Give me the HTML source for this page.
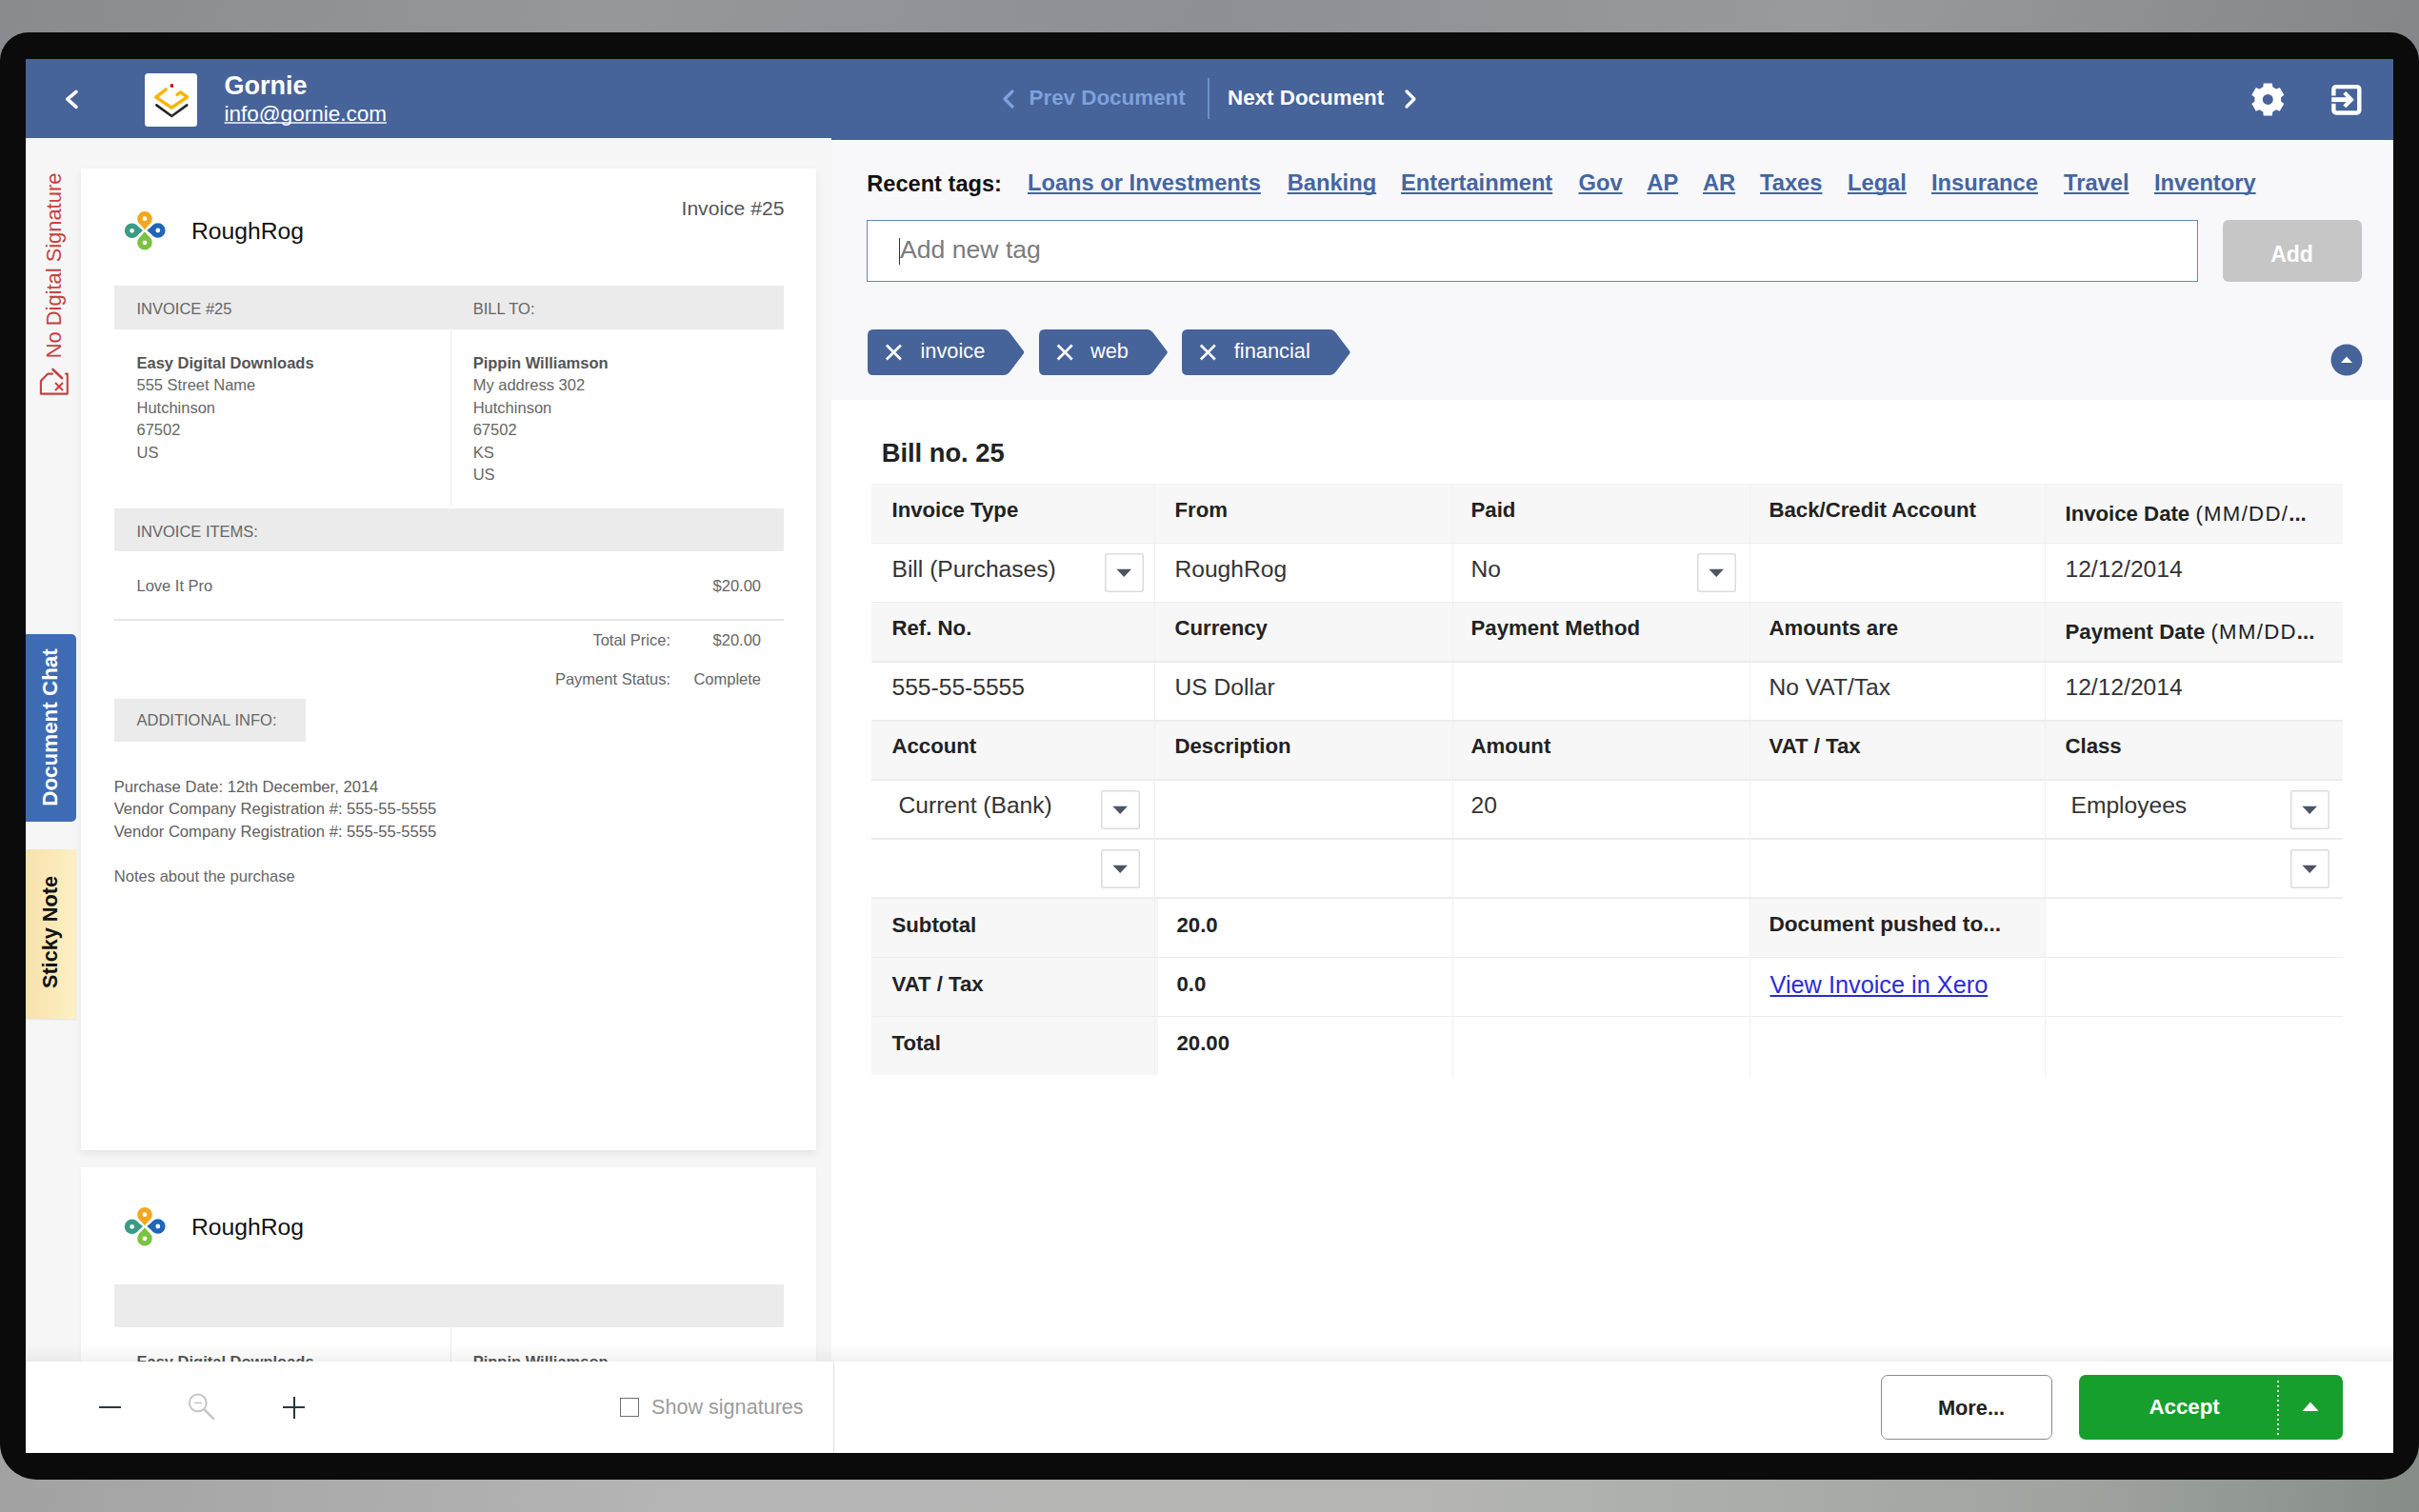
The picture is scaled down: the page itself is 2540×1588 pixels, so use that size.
<!DOCTYPE html>
<html><head><meta charset="utf-8"><title>Gornie</title>
<style>
html,body{margin:0;padding:0;width:2540px;height:1588px;overflow:hidden;background:#9a9b9d;}
body{position:relative;font-family:"Liberation Sans",sans-serif;}
.b{position:absolute;display:block;}
.t{position:absolute;white-space:nowrap;}
</style></head><body>
<div class="b" style="left:0;top:0;width:2540px;height:1588px;background:linear-gradient(180deg,#8d8e93 0px,#909196 34px,#a9aaa9 1554px,#b3b4b2 1588px);"></div>
<div class="b" style="left:0;top:0;width:2540px;height:80px;background:linear-gradient(100deg,#8a8b8e 0%,#96979b 25%,#8d8f95 50%,#999a9d 75%,#85868a 100%);"></div>
<div class="b" style="left:0;top:1500px;width:2540px;height:88px;background:linear-gradient(95deg,#a2a2a2 0%,#b6b6b6 30%,#b4b5b3 60%,#a0a5a0 85%,#868d87 100%);"></div>
<div class="b" style="left:0.00px;top:34.00px;width:2540.00px;height:1520.00px;background:#0b0b0b;border-radius:30px 30px 38px 38px;"></div>
<div class="b" style="left:27.00px;top:62.00px;width:2486.00px;height:1464.00px;background:#ffffff;"></div>
<div class="b" style="left:27.00px;top:62.00px;width:2486.00px;height:83.00px;background:#46639a;"></div>
<div class="b" style="left:873.00px;top:145.00px;width:1640.00px;height:2.00px;background:#46639a;"></div>
<svg class="b" style="left:60.00px;top:88.00px;" width="30" height="32" viewBox="0 0 30 32"><polyline points="20,8.3 10.8,16.2 20,24.3" fill="none" stroke="#fff" stroke-width="3.6" stroke-linecap="round" stroke-linejoin="round"/></svg>
<div class="b" style="left:151.80px;top:76.60px;width:55.70px;height:56.20px;background:#fff;border-radius:3.5px;"></div>
<svg class="b" style="left:151.50px;top:76.50px;" width="56" height="56" viewBox="0 0 56 56"><circle cx="28.4" cy="13" r="1.9" fill="#d0021b"/><polyline points="22.3,16.8 11.8,25.2 28.2,36.2 44.6,24.9 37.6,19.8 34,22.4" fill="none" stroke="#f9b400" stroke-width="3.4" stroke-linejoin="round" stroke-linecap="round"/><polyline points="12.3,33.4 28.3,45 44.3,33.4" fill="none" stroke="#262626" stroke-width="2.6" stroke-linejoin="miter" stroke-linecap="round"/></svg>
<div class="t" style="top:77.24px;font-size:27px;line-height:27px;color:#fff;font-weight:700;left:235.50px;">Gornie</div>
<div class="t" style="top:108.55px;font-size:22.5px;line-height:22.5px;color:#fff;left:235.50px;text-decoration:underline;text-decoration-color:rgba(255,255,255,0.7);text-underline-offset:1px;text-decoration-thickness:1.5px;text-decoration-skip-ink:none;">info@gornie.com</div>
<svg class="b" style="left:1046.00px;top:91.00px;" width="24" height="26" viewBox="0 0 24 26"><polyline points="17,5 9,13 17,21" fill="none" stroke="#7ea2dd" stroke-width="3.2" stroke-linecap="round" stroke-linejoin="round"/></svg>
<div class="t" style="top:92.33px;font-size:22.4px;line-height:22.4px;color:#7ea2dd;font-weight:700;left:1080.50px;">Prev Document</div>
<div class="b" style="left:1268.00px;top:82.00px;width:2.00px;height:42.50px;background:#6d8fc9;"></div>
<div class="t" style="top:92.33px;font-size:22.4px;line-height:22.4px;color:#fff;font-weight:700;left:1289.00px;">Next Document</div>
<svg class="b" style="left:1469.50px;top:91.00px;" width="24" height="26" viewBox="0 0 24 26"><polyline points="7,5 15,13 7,21" fill="none" stroke="#fff" stroke-width="3.2" stroke-linecap="round" stroke-linejoin="round"/></svg>
<svg class="b" style="left:2362.00px;top:85.00px;" width="40" height="40" viewBox="0 0 40 40"><path d="M14.28,6.33 L14.74,2.40 L23.86,2.40 L24.32,6.33 L28.11,8.52 L31.75,6.95 L36.30,14.84 L33.13,17.21 L33.13,21.59 L36.30,23.96 L31.75,31.85 L28.11,30.28 L24.32,32.47 L23.86,36.40 L14.74,36.40 L14.28,32.47 L10.49,30.28 L6.85,31.85 L2.30,23.96 L5.47,21.59 L5.47,17.21 L2.30,14.84 L6.85,6.95 L10.49,8.52 Z" fill="#fff"/><circle cx="19.3" cy="19.4" r="5.5" fill="#46639a"/></svg>
<svg class="b" style="left:2444.00px;top:84.00px;" width="42" height="42" viewBox="0 0 42 42"><rect x="6.4" y="7.1" width="26.9" height="27.4" rx="2.5" fill="none" stroke="#fff" stroke-width="4.4"/><line x1="2" y1="20.65" x2="24" y2="20.65" stroke="#46639a" stroke-width="8.3"/><line x1="4.2" y1="20.65" x2="25" y2="20.65" stroke="#fff" stroke-width="4.9"/><polyline points="17.8,13.4 24.9,20.65 17.8,27.9" fill="none" stroke="#fff" stroke-width="4.2"/></svg>
<div class="b" style="left:27.00px;top:145.00px;width:846.00px;height:1285.00px;background:#f6f6f6;"></div>
<div class="t" style="left:56.6px;top:279.2px;width:0;height:0;"><div style="position:absolute;left:0;top:0;transform:translate(-50%,-50%) rotate(-90deg);white-space:nowrap;font-size:21.9px;line-height:22px;color:#c6413f;">No Digital Signature</div></div>
<svg class="b" style="left:38.00px;top:384.00px;" width="38" height="34" viewBox="0 0 38 34"><path d="M17,8.6 H12.3 L4.9,16 V29.6 H32.8 V8.6 H31" fill="none" stroke="#c6413f" stroke-width="2.1" stroke-linejoin="round" stroke-linecap="round"/><line x1="17.5" y1="4" x2="27" y2="13" stroke="#c6413f" stroke-width="2.6" stroke-linecap="round"/><line x1="20" y1="18" x2="28" y2="26" stroke="#c6413f" stroke-width="2"/><line x1="28" y1="18" x2="20" y2="26" stroke="#c6413f" stroke-width="2"/></svg>
<div class="b" style="left:27.00px;top:666.00px;width:53.20px;height:197.00px;background:#3e6cb4;border-radius:0 5px 5px 0;"></div>
<div class="t" style="left:53.2px;top:764px;width:0;height:0;"><div style="position:absolute;left:0;top:0;transform:translate(-50%,-50%) rotate(-90deg);white-space:nowrap;font-size:22.4px;line-height:22px;color:#fff;font-weight:700;">Document Chat</div></div>
<div class="b" style="left:27.00px;top:891.70px;width:53.20px;height:178.80px;background:linear-gradient(90deg,#f6e2ac,#fdf0c3);box-shadow:0 1px 2px rgba(0,0,0,0.08);"></div>
<div class="t" style="left:53.2px;top:979px;width:0;height:0;"><div style="position:absolute;left:0;top:0;transform:translate(-50%,-50%) rotate(-90deg);white-space:nowrap;font-size:21.7px;line-height:22px;color:#111;font-weight:700;">Sticky Note</div></div>
<div class="b" style="left:85.00px;top:177.00px;width:772.00px;height:1031.00px;background:#fff;box-shadow:0 4px 8px rgba(0,0,0,0.07);"></div>
<svg class="b" style="left:130.00px;top:220.00px;" width="44" height="44" viewBox="0 0 44 44"><circle cx="22" cy="9.7" r="5.1" fill="none" stroke="#f1a81f" stroke-width="5.4"/><polygon points="22.0,21.2 16.5,14.7 27.5,14.7" fill="#f1a81f"/><circle cx="35.8" cy="22" r="5.1" fill="none" stroke="#1f66b8" stroke-width="5.4"/><polygon points="24.3,22.0 30.8,16.5 30.8,27.5" fill="#1f66b8"/><circle cx="22" cy="34.8" r="5.1" fill="none" stroke="#7cc242" stroke-width="5.4"/><polygon points="22.0,23.3 27.5,29.8 16.5,29.8" fill="#7cc242"/><circle cx="8.6" cy="22.3" r="5.1" fill="none" stroke="#3a9b86" stroke-width="5.4"/><polygon points="20.1,22.0 13.7,27.7 13.5,16.7" fill="#3a9b86"/></svg>
<div class="t" style="top:231.09px;font-size:24.7px;line-height:24.7px;color:#111;left:201.00px;">RoughRog</div>
<div class="b" style="left:85.00px;top:1226.00px;width:772.00px;height:204.00px;background:#fff;box-shadow:0 1px 3px rgba(0,0,0,0.06);"></div>
<svg class="b" style="left:130.00px;top:1266.00px;" width="44" height="44" viewBox="0 0 44 44"><circle cx="22" cy="9.7" r="5.1" fill="none" stroke="#f1a81f" stroke-width="5.4"/><polygon points="22.0,21.2 16.5,14.7 27.5,14.7" fill="#f1a81f"/><circle cx="35.8" cy="22" r="5.1" fill="none" stroke="#1f66b8" stroke-width="5.4"/><polygon points="24.3,22.0 30.8,16.5 30.8,27.5" fill="#1f66b8"/><circle cx="22" cy="34.8" r="5.1" fill="none" stroke="#7cc242" stroke-width="5.4"/><polygon points="22.0,23.3 27.5,29.8 16.5,29.8" fill="#7cc242"/><circle cx="8.6" cy="22.3" r="5.1" fill="none" stroke="#3a9b86" stroke-width="5.4"/><polygon points="20.1,22.0 13.7,27.7 13.5,16.7" fill="#3a9b86"/></svg>
<div class="t" style="top:1277.09px;font-size:24.7px;line-height:24.7px;color:#111;left:201.00px;">RoughRog</div>
<div class="t" style="top:208.43px;font-size:21.1px;line-height:21.1px;color:#555;right:1716.60px;">Invoice #25</div>
<div class="b" style="left:120.00px;top:300.00px;width:703.00px;height:45.50px;background:#ebebeb;"></div>
<div class="b" style="left:473.00px;top:345.50px;width:1.00px;height:186.50px;background:#ebebeb;"></div>
<div class="t" style="top:315.83px;font-size:16.5px;line-height:16.5px;color:#666;left:143.50px;">INVOICE #25</div>
<div class="t" style="top:315.83px;font-size:16.5px;line-height:16.5px;color:#666;left:496.70px;">BILL TO:</div>
<div class="t" style="top:373.03px;font-size:16.5px;line-height:16.5px;color:#666;left:143.50px;"><b style="color:#555">Easy Digital Downloads</b></div>
<div class="t" style="top:396.43px;font-size:16.5px;line-height:16.5px;color:#666;left:143.50px;">555 Street Name</div>
<div class="t" style="top:419.83px;font-size:16.5px;line-height:16.5px;color:#666;left:143.50px;">Hutchinson</div>
<div class="t" style="top:443.23px;font-size:16.5px;line-height:16.5px;color:#666;left:143.50px;">67502</div>
<div class="t" style="top:466.63px;font-size:16.5px;line-height:16.5px;color:#666;left:143.50px;">US</div>
<div class="t" style="top:373.03px;font-size:16.5px;line-height:16.5px;color:#666;left:496.70px;"><b style="color:#555">Pippin Williamson</b></div>
<div class="t" style="top:396.43px;font-size:16.5px;line-height:16.5px;color:#666;left:496.70px;">My address 302</div>
<div class="t" style="top:419.83px;font-size:16.5px;line-height:16.5px;color:#666;left:496.70px;">Hutchinson</div>
<div class="t" style="top:443.23px;font-size:16.5px;line-height:16.5px;color:#666;left:496.70px;">67502</div>
<div class="t" style="top:466.63px;font-size:16.5px;line-height:16.5px;color:#666;left:496.70px;">KS</div>
<div class="t" style="top:490.03px;font-size:16.5px;line-height:16.5px;color:#666;left:496.70px;">US</div>
<div class="b" style="left:120.00px;top:534.00px;width:703.00px;height:45.00px;background:#ebebeb;"></div>
<div class="t" style="top:550.03px;font-size:16.5px;line-height:16.5px;color:#666;left:143.50px;">INVOICE ITEMS:</div>
<div class="t" style="top:607.03px;font-size:16.5px;line-height:16.5px;color:#666;left:143.50px;">Love It Pro</div>
<div class="t" style="top:607.03px;font-size:16.5px;line-height:16.5px;color:#666;right:1741.00px;">$20.00</div>
<div class="b" style="left:120.00px;top:650.00px;width:703.00px;height:1.50px;background:#e6e6e6;"></div>
<div class="t" style="top:663.53px;font-size:16.5px;line-height:16.5px;color:#666;right:1836.00px;">Total Price:</div>
<div class="t" style="top:663.53px;font-size:16.5px;line-height:16.5px;color:#666;right:1741.00px;">$20.00</div>
<div class="t" style="top:704.83px;font-size:16.5px;line-height:16.5px;color:#666;right:1836.00px;">Payment Status:</div>
<div class="t" style="top:704.83px;font-size:16.5px;line-height:16.5px;color:#666;right:1741.00px;">Complete</div>
<div class="b" style="left:120.00px;top:734.30px;width:200.70px;height:44.30px;background:#ebebeb;"></div>
<div class="t" style="top:748.43px;font-size:16.5px;line-height:16.5px;color:#666;left:143.50px;">ADDITIONAL INFO:</div>
<div class="t" style="top:818.84px;font-size:16.6px;line-height:16.6px;color:#606060;left:119.70px;">Purchase Date: 12th December, 2014</div>
<div class="t" style="top:842.24px;font-size:16.6px;line-height:16.6px;color:#606060;left:119.70px;">Vendor Company Registration #: 555-55-5555</div>
<div class="t" style="top:865.64px;font-size:16.6px;line-height:16.6px;color:#606060;left:119.70px;">Vendor Company Registration #: 555-55-5555</div>
<div class="t" style="top:912.74px;font-size:16.6px;line-height:16.6px;color:#666;left:119.70px;">Notes about the purchase</div>
<div class="b" style="left:120.00px;top:1348.50px;width:703.00px;height:45.70px;background:#ebebeb;"></div>
<div class="b" style="left:473.00px;top:1394.20px;width:1.00px;height:35.80px;background:#ebebeb;"></div>
<div class="t" style="top:1422.03px;font-size:16.5px;line-height:16.5px;color:#666;left:143.50px;"><b style="color:#555">Easy Digital Downloads</b></div>
<div class="t" style="top:1422.03px;font-size:16.5px;line-height:16.5px;color:#666;left:496.70px;"><b style="color:#555">Pippin Williamson</b></div>
<div class="b" style="left:873.00px;top:147.00px;width:1640.00px;height:273.00px;background:#f8f8fa;"></div>
<div class="t" style="top:181.52px;font-size:23.6px;line-height:23.6px;color:#111;font-weight:700;left:910.30px;">Recent tags:</div>
<div class="t" style="top:181.43px;font-size:23.7px;line-height:23.7px;color:#4565a3;font-weight:700;left:1079.00px;text-decoration:underline;text-underline-offset:1.5px;text-decoration-thickness:1.6px;text-decoration-skip-ink:none;">Loans or Investments</div>
<div class="t" style="top:181.43px;font-size:23.7px;line-height:23.7px;color:#4565a3;font-weight:700;left:1351.70px;text-decoration:underline;text-underline-offset:1.5px;text-decoration-thickness:1.6px;text-decoration-skip-ink:none;">Banking</div>
<div class="t" style="top:181.43px;font-size:23.7px;line-height:23.7px;color:#4565a3;font-weight:700;left:1471.00px;text-decoration:underline;text-underline-offset:1.5px;text-decoration-thickness:1.6px;text-decoration-skip-ink:none;">Entertainment</div>
<div class="t" style="top:181.43px;font-size:23.7px;line-height:23.7px;color:#4565a3;font-weight:700;left:1657.50px;text-decoration:underline;text-underline-offset:1.5px;text-decoration-thickness:1.6px;text-decoration-skip-ink:none;">Gov</div>
<div class="t" style="top:181.43px;font-size:23.7px;line-height:23.7px;color:#4565a3;font-weight:700;left:1729.30px;text-decoration:underline;text-underline-offset:1.5px;text-decoration-thickness:1.6px;text-decoration-skip-ink:none;">AP</div>
<div class="t" style="top:181.43px;font-size:23.7px;line-height:23.7px;color:#4565a3;font-weight:700;left:1788.00px;text-decoration:underline;text-underline-offset:1.5px;text-decoration-thickness:1.6px;text-decoration-skip-ink:none;">AR</div>
<div class="t" style="top:181.43px;font-size:23.7px;line-height:23.7px;color:#4565a3;font-weight:700;left:1848.00px;text-decoration:underline;text-underline-offset:1.5px;text-decoration-thickness:1.6px;text-decoration-skip-ink:none;">Taxes</div>
<div class="t" style="top:181.43px;font-size:23.7px;line-height:23.7px;color:#4565a3;font-weight:700;left:1940.00px;text-decoration:underline;text-underline-offset:1.5px;text-decoration-thickness:1.6px;text-decoration-skip-ink:none;">Legal</div>
<div class="t" style="top:181.43px;font-size:23.7px;line-height:23.7px;color:#4565a3;font-weight:700;left:2028.00px;text-decoration:underline;text-underline-offset:1.5px;text-decoration-thickness:1.6px;text-decoration-skip-ink:none;">Insurance</div>
<div class="t" style="top:181.43px;font-size:23.7px;line-height:23.7px;color:#4565a3;font-weight:700;left:2167.00px;text-decoration:underline;text-underline-offset:1.5px;text-decoration-thickness:1.6px;text-decoration-skip-ink:none;">Travel</div>
<div class="t" style="top:181.43px;font-size:23.7px;line-height:23.7px;color:#4565a3;font-weight:700;left:2262.00px;text-decoration:underline;text-underline-offset:1.5px;text-decoration-thickness:1.6px;text-decoration-skip-ink:none;">Inventory</div>
<div class="b" style="left:909.60px;top:230.50px;width:1398.90px;height:65.00px;background:#fff;border:1.6px solid #6a86b3;box-sizing:border-box;"></div>
<div class="t" style="top:249.08px;font-size:26.6px;line-height:26.6px;color:#7c7c7c;left:945.00px;">Add new tag</div>
<div class="b" style="left:944.00px;top:250.00px;width:1.30px;height:28.00px;background:#333;"></div>
<div class="b" style="left:2334.00px;top:231.00px;width:146.00px;height:65.00px;background:#c6c6c6;border-radius:6px;"></div>
<div class="t" style="top:255.53px;font-size:23px;line-height:23px;color:#fff;font-weight:700;left:1906.50px;width:1000px;text-align:center;">Add</div>
<svg class="b" style="left:911.30px;top:346.00px;" width="164.70000000000005" height="48" viewBox="0 0 164.70000000000005 48"><path d="M6,0 H142.70000000000005 Q146.70000000000005,0 149.70000000000005,4 L163.90000000000003,22.8 Q164.70000000000005,24.0 163.90000000000003,25.2 L149.70000000000005,44 Q146.70000000000005,48 142.70000000000005,48 H6 Q0,48 0,42 V6 Q0,0 6,0 Z" fill="#46639a"/><path d="M19.900000000000023,16.5 L34.90000000000002,31.5 M34.90000000000002,16.5 L19.900000000000023,31.5" stroke="#fff" stroke-width="2.7"/></svg>
<div class="t" style="top:357.54px;font-size:21.8px;line-height:21.8px;color:#fff;left:966.50px;">invoice</div>
<svg class="b" style="left:1090.80px;top:346.00px;" width="135.20000000000005" height="48" viewBox="0 0 135.20000000000005 48"><path d="M6,0 H113.20000000000005 Q117.20000000000005,0 120.20000000000005,4 L134.40000000000003,22.8 Q135.20000000000005,24.0 134.40000000000003,25.2 L120.20000000000005,44 Q117.20000000000005,48 113.20000000000005,48 H6 Q0,48 0,42 V6 Q0,0 6,0 Z" fill="#46639a"/><path d="M19.70000000000009,16.5 L34.70000000000009,31.5 M34.70000000000009,16.5 L19.70000000000009,31.5" stroke="#fff" stroke-width="2.7"/></svg>
<div class="t" style="top:357.54px;font-size:21.8px;line-height:21.8px;color:#fff;left:1145.00px;">web</div>
<svg class="b" style="left:1241.00px;top:346.00px;" width="177" height="48" viewBox="0 0 177 48"><path d="M6,0 H155 Q159,0 162,4 L176.2,22.8 Q177,24.0 176.2,25.2 L162,44 Q159,48 155,48 H6 Q0,48 0,42 V6 Q0,0 6,0 Z" fill="#46639a"/><path d="M19.8,16.5 L34.8,31.5 M34.8,16.5 L19.8,31.5" stroke="#fff" stroke-width="2.7"/></svg>
<div class="t" style="top:357.54px;font-size:21.8px;line-height:21.8px;color:#fff;left:1295.80px;">financial</div>
<svg class="b" style="left:2447.00px;top:361.00px;" width="34" height="34" viewBox="0 0 34 34"><circle cx="17" cy="17" r="16.5" fill="#46639a"/><polygon points="11,20 17,13.5 23,20" fill="#fff"/></svg>
<div class="t" style="top:462.39px;font-size:27.3px;line-height:27.3px;color:#222;font-weight:700;left:925.70px;">Bill no. 25</div>
<div class="b" style="left:915.00px;top:508.20px;width:1545.00px;height:62.11px;background:#f7f7f7;"></div>
<div class="b" style="left:915.00px;top:632.42px;width:1545.00px;height:62.11px;background:#f7f7f7;"></div>
<div class="b" style="left:915.00px;top:756.64px;width:1545.00px;height:62.11px;background:#f7f7f7;"></div>
<div class="b" style="left:915.00px;top:942.97px;width:300.50px;height:62.11px;background:#f7f7f7;"></div>
<div class="b" style="left:915.00px;top:1005.08px;width:300.50px;height:62.11px;background:#f7f7f7;"></div>
<div class="b" style="left:915.00px;top:1067.19px;width:300.50px;height:62.11px;background:#f7f7f7;"></div>
<div class="b" style="left:1837.00px;top:942.97px;width:310.50px;height:62.11px;background:#f7f7f7;"></div>
<div class="b" style="left:915.00px;top:569.81px;width:1545.00px;height:1.50px;background:#ececec;"></div>
<div class="b" style="left:915.00px;top:631.92px;width:1545.00px;height:1.50px;background:#ececec;"></div>
<div class="b" style="left:915.00px;top:694.03px;width:1545.00px;height:1.50px;background:#ececec;"></div>
<div class="b" style="left:915.00px;top:756.14px;width:1545.00px;height:1.50px;background:#ececec;"></div>
<div class="b" style="left:915.00px;top:818.25px;width:1545.00px;height:1.50px;background:#ececec;"></div>
<div class="b" style="left:915.00px;top:880.36px;width:1545.00px;height:1.50px;background:#ececec;"></div>
<div class="b" style="left:915.00px;top:942.47px;width:1545.00px;height:1.50px;background:#ececec;"></div>
<div class="b" style="left:915.00px;top:1004.58px;width:1545.00px;height:1.50px;background:#ececec;"></div>
<div class="b" style="left:915.00px;top:1066.69px;width:1545.00px;height:1.50px;background:#ececec;"></div>
<div class="b" style="left:1212.00px;top:508.00px;width:1.00px;height:623.00px;background:#f0f0f0;"></div>
<div class="b" style="left:1524.50px;top:508.00px;width:1.00px;height:623.00px;background:#f0f0f0;"></div>
<div class="b" style="left:1836.50px;top:508.00px;width:1.00px;height:623.00px;background:#f0f0f0;"></div>
<div class="b" style="left:2147.00px;top:508.00px;width:1.00px;height:623.00px;background:#f0f0f0;"></div>
<div class="t" style="top:524.60px;font-size:22.2px;line-height:22.2px;color:#222;font-weight:700;left:936.50px;">Invoice Type</div>
<div class="t" style="top:524.60px;font-size:22.2px;line-height:22.2px;color:#222;font-weight:700;left:1233.50px;">From</div>
<div class="t" style="top:524.60px;font-size:22.2px;line-height:22.2px;color:#222;font-weight:700;left:1544.50px;">Paid</div>
<div class="t" style="top:524.60px;font-size:22.2px;line-height:22.2px;color:#222;font-weight:700;left:1857.50px;">Back/Credit Account</div>
<div class="t" style="top:528.60px;font-size:22.2px;line-height:22.2px;color:#222;font-weight:700;left:2168.50px;">Invoice Date <span style="font-weight:400;letter-spacing:1.3px;">(MM/DD/</span>...</div>
<div class="t" style="top:585.98px;font-size:24.6px;line-height:24.6px;color:#333;left:936.50px;">Bill (Purchases)</div>
<div class="t" style="top:585.98px;font-size:24.6px;line-height:24.6px;color:#333;left:1233.50px;">RoughRog</div>
<div class="t" style="top:585.98px;font-size:24.6px;line-height:24.6px;color:#333;left:1544.50px;">No</div>
<div class="t" style="top:585.98px;font-size:24.6px;line-height:24.6px;color:#333;left:2168.50px;">12/12/2014</div>
<svg class="b" style="left:1160.00px;top:581.00px;" width="41" height="41" viewBox="0 0 41 41"><rect x="0.75" y="0.75" width="39.5" height="39.5" rx="2" fill="#fff" stroke="#dcdcdc" stroke-width="1.5"/><polygon points="12.4,16.8 28,16.8 20.2,25" fill="#4b5563"/></svg>
<svg class="b" style="left:1781.50px;top:581.00px;" width="41" height="41" viewBox="0 0 41 41"><rect x="0.75" y="0.75" width="39.5" height="39.5" rx="2" fill="#fff" stroke="#dcdcdc" stroke-width="1.5"/><polygon points="12.4,16.8 28,16.8 20.2,25" fill="#4b5563"/></svg>
<div class="t" style="top:648.82px;font-size:22.2px;line-height:22.2px;color:#222;font-weight:700;left:936.50px;">Ref. No.</div>
<div class="t" style="top:648.82px;font-size:22.2px;line-height:22.2px;color:#222;font-weight:700;left:1233.50px;">Currency</div>
<div class="t" style="top:648.82px;font-size:22.2px;line-height:22.2px;color:#222;font-weight:700;left:1544.50px;">Payment Method</div>
<div class="t" style="top:648.82px;font-size:22.2px;line-height:22.2px;color:#222;font-weight:700;left:1857.50px;">Amounts are</div>
<div class="t" style="top:652.82px;font-size:22.2px;line-height:22.2px;color:#222;font-weight:700;left:2168.50px;">Payment Date <span style="font-weight:400;letter-spacing:1.3px;">(MM/DD</span>...</div>
<div class="t" style="top:710.20px;font-size:24.6px;line-height:24.6px;color:#333;left:936.50px;">555-55-5555</div>
<div class="t" style="top:710.20px;font-size:24.6px;line-height:24.6px;color:#333;left:1233.50px;">US Dollar</div>
<div class="t" style="top:710.20px;font-size:24.6px;line-height:24.6px;color:#333;left:1857.50px;">No VAT/Tax</div>
<div class="t" style="top:710.20px;font-size:24.6px;line-height:24.6px;color:#333;left:2168.50px;">12/12/2014</div>
<div class="t" style="top:773.04px;font-size:22.2px;line-height:22.2px;color:#222;font-weight:700;left:936.50px;">Account</div>
<div class="t" style="top:773.04px;font-size:22.2px;line-height:22.2px;color:#222;font-weight:700;left:1233.50px;">Description</div>
<div class="t" style="top:773.04px;font-size:22.2px;line-height:22.2px;color:#222;font-weight:700;left:1544.50px;">Amount</div>
<div class="t" style="top:773.04px;font-size:22.2px;line-height:22.2px;color:#222;font-weight:700;left:1857.50px;">VAT / Tax</div>
<div class="t" style="top:773.04px;font-size:22.2px;line-height:22.2px;color:#222;font-weight:700;left:2168.50px;">Class</div>
<div class="t" style="top:834.42px;font-size:24.6px;line-height:24.6px;color:#333;left:943.50px;">Current (Bank)</div>
<div class="t" style="top:834.42px;font-size:24.6px;line-height:24.6px;color:#333;left:1544.50px;">20</div>
<div class="t" style="top:834.42px;font-size:24.6px;line-height:24.6px;color:#333;left:2174.50px;">Employees</div>
<svg class="b" style="left:1155.80px;top:829.50px;" width="41" height="41" viewBox="0 0 41 41"><rect x="0.75" y="0.75" width="39.5" height="39.5" rx="2" fill="#fff" stroke="#dcdcdc" stroke-width="1.5"/><polygon points="12.4,16.8 28,16.8 20.2,25" fill="#4b5563"/></svg>
<svg class="b" style="left:2404.50px;top:829.50px;" width="41" height="41" viewBox="0 0 41 41"><rect x="0.75" y="0.75" width="39.5" height="39.5" rx="2" fill="#fff" stroke="#dcdcdc" stroke-width="1.5"/><polygon points="12.4,16.8 28,16.8 20.2,25" fill="#4b5563"/></svg>
<svg class="b" style="left:1155.80px;top:891.50px;" width="41" height="41" viewBox="0 0 41 41"><rect x="0.75" y="0.75" width="39.5" height="39.5" rx="2" fill="#fff" stroke="#dcdcdc" stroke-width="1.5"/><polygon points="12.4,16.8 28,16.8 20.2,25" fill="#4b5563"/></svg>
<svg class="b" style="left:2404.50px;top:891.50px;" width="41" height="41" viewBox="0 0 41 41"><rect x="0.75" y="0.75" width="39.5" height="39.5" rx="2" fill="#fff" stroke="#dcdcdc" stroke-width="1.5"/><polygon points="12.4,16.8 28,16.8 20.2,25" fill="#4b5563"/></svg>
<div class="t" style="top:960.67px;font-size:22.2px;line-height:22.2px;color:#222;font-weight:700;left:936.50px;">Subtotal</div>
<div class="t" style="top:1022.78px;font-size:22.2px;line-height:22.2px;color:#222;font-weight:700;left:936.50px;">VAT / Tax</div>
<div class="t" style="top:1084.89px;font-size:22.2px;line-height:22.2px;color:#222;font-weight:700;left:936.50px;">Total</div>
<div class="t" style="top:960.67px;font-size:22.2px;line-height:22.2px;color:#222;font-weight:700;left:1235.50px;">20.0</div>
<div class="t" style="top:1022.78px;font-size:22.2px;line-height:22.2px;color:#222;font-weight:700;left:1235.50px;">0.0</div>
<div class="t" style="top:1084.89px;font-size:22.2px;line-height:22.2px;color:#222;font-weight:700;left:1235.50px;">20.00</div>
<div class="t" style="top:960.33px;font-size:22.6px;line-height:22.6px;color:#222;font-weight:700;left:1857.50px;">Document pushed to...</div>
<div class="t" style="top:1022.16px;font-size:25.3px;line-height:25.3px;color:#2b2bd9;left:1858.50px;text-decoration:underline;text-underline-offset:2px;text-decoration-thickness:1.5px;text-decoration-skip-ink:none;">View Invoice in Xero</div>
<div class="b" style="left:27.00px;top:1412.00px;width:2486.00px;height:18.00px;background:linear-gradient(180deg,rgba(0,0,0,0) 0%,rgba(0,0,0,0.05) 100%);"></div>
<div class="b" style="left:27.00px;top:1430.00px;width:2486.00px;height:96.00px;background:#fff;"></div>
<div class="b" style="left:874.50px;top:1430.00px;width:1.20px;height:96.00px;background:#e2e2e2;"></div>
<div class="b" style="left:104.00px;top:1476.90px;width:23.20px;height:2.40px;background:#263845;"></div>
<svg class="b" style="left:195.00px;top:1461.20px;" width="36" height="36" viewBox="0 0 36 36"><circle cx="12.8" cy="12.4" r="8.9" fill="none" stroke="#c8c8c8" stroke-width="2.1"/><line x1="9" y1="12.4" x2="17" y2="12.4" stroke="#c8c8c8" stroke-width="1.6"/><line x1="19.2" y1="19" x2="29" y2="28.8" stroke="#c8c8c8" stroke-width="2.6" stroke-linecap="round"/></svg>
<div class="b" style="left:297.10px;top:1476.90px;width:23.30px;height:2.40px;background:#263845;"></div>
<div class="b" style="left:307.60px;top:1466.50px;width:2.40px;height:23.00px;background:#263845;"></div>
<div class="b" style="left:650.90px;top:1468.00px;width:20.10px;height:20.00px;border:1.6px solid #707070;box-sizing:border-box;background:#fff;"></div>
<div class="t" style="top:1466.51px;font-size:21.6px;line-height:21.6px;color:#9c9c9c;left:684.00px;">Show signatures</div>
<div class="b" style="left:1974.70px;top:1444.20px;width:179.90px;height:67.50px;border:1.6px solid #8b8b8b;border-radius:7px;box-sizing:border-box;background:#fff;"></div>
<div class="t" style="top:1467.54px;font-size:21.8px;line-height:21.8px;color:#222;font-weight:700;left:1570.00px;width:1000px;text-align:center;">More...</div>
<div class="b" style="left:2183.00px;top:1444.20px;width:277.30px;height:67.50px;background:#179f2e;border-radius:7px;"></div>
<div class="t" style="top:1467.12px;font-size:22.3px;line-height:22.3px;color:#fff;font-weight:700;left:1793.60px;width:1000px;text-align:center;">Accept</div>
<div class="b" style="left:2390.50px;top:1450.00px;width:2.00px;height:57.00px;background-image:linear-gradient(180deg,rgba(255,255,255,0.85) 50%,rgba(255,255,255,0) 50%);background-size:2px 5px;"></div>
<svg class="b" style="left:2414.00px;top:1468.00px;" width="24" height="18" viewBox="0 0 24 18"><polygon points="3.5,14 12,4.5 20.5,14" fill="#fff"/></svg>
</body></html>
